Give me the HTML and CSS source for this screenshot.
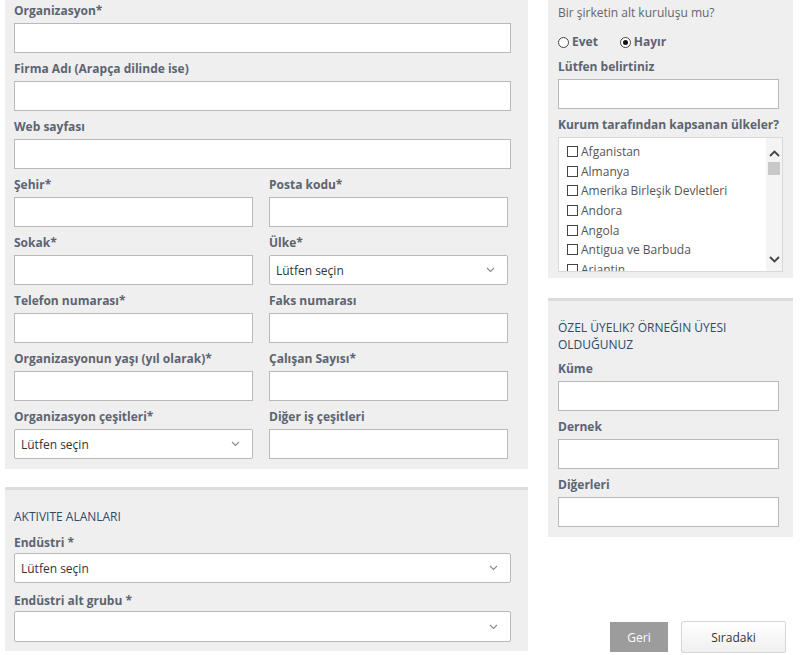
FILE: index.html
```html
<!DOCTYPE html>
<html lang="tr">
<head>
<meta charset="utf-8">
<title>Form</title>
<link rel="stylesheet" href="styles.css">
</head>
<body>
<div class="page">
  <div class="col-left">
    <section class="panel panel-main">
      <div class="field"><label class="lbl">Organizasyon*</label><div class="input"></div></div>
      <div class="field"><label class="lbl">Firma Adı (Arapça dilinde ise)</label><div class="input"></div></div>
      <div class="field"><label class="lbl">Web sayfası</label><div class="input"></div></div>
      <div class="pair">
        <div class="field"><label class="lbl">Şehir*</label><div class="input"></div></div>
        <div class="field"><label class="lbl">Posta kodu*</label><div class="input"></div></div>
      </div>
      <div class="pair">
        <div class="field"><label class="lbl">Sokak*</label><div class="input"></div></div>
        <div class="field"><label class="lbl">Ülke*</label><div class="input select"><span>Lütfen seçin</span><svg class="chev" width="9" height="6" viewBox="0 0 9 6"><path d="M1 1 L4.5 4.5 L8 1" fill="none" stroke="#8a8a8a" stroke-width="1.1"/></svg></div></div>
      </div>
      <div class="pair">
        <div class="field"><label class="lbl">Telefon numarası*</label><div class="input"></div></div>
        <div class="field"><label class="lbl">Faks numarası</label><div class="input"></div></div>
      </div>
      <div class="pair">
        <div class="field"><label class="lbl">Organizasyonun yaşı (yıl olarak)*</label><div class="input"></div></div>
        <div class="field"><label class="lbl">Çalışan Sayısı*</label><div class="input"></div></div>
      </div>
      <div class="pair">
        <div class="field"><label class="lbl">Organizasyon çeşitleri*</label><div class="input select"><span>Lütfen seçin</span><svg class="chev" width="9" height="6" viewBox="0 0 9 6"><path d="M1 1 L4.5 4.5 L8 1" fill="none" stroke="#8a8a8a" stroke-width="1.1"/></svg></div></div>
        <div class="field"><label class="lbl">Diğer iş çeşitleri</label><div class="input"></div></div>
      </div>
    </section>
    <section class="panel panel-top panel-activity">
      <h2 class="heading">AKTIVITE ALANLARI</h2>
      <div class="field"><label class="lbl">Endüstri *</label><div class="input select wide"><span>Lütfen seçin</span><svg class="chev" width="9" height="6" viewBox="0 0 9 6"><path d="M1 1 L4.5 4.5 L8 1" fill="none" stroke="#8a8a8a" stroke-width="1.1"/></svg></div></div>
      <div class="field"><label class="lbl">Endüstri alt grubu *</label><div class="input select wide tall"><span></span><svg class="chev" width="9" height="6" viewBox="0 0 9 6"><path d="M1 1 L4.5 4.5 L8 1" fill="none" stroke="#8a8a8a" stroke-width="1.1"/></svg></div></div>
    </section>
  </div>
  <div class="col-right">
    <section class="panel panel-side">
      <p class="question">Bir şirketin alt kuruluşu mu?</p>
      <div class="radios">
        <span class="radio"><span class="dot"></span>Evet</span>
        <span class="radio"><span class="dot on"></span>Hayır</span>
      </div>
      <div class="field"><label class="lbl">Lütfen belirtiniz</label><div class="input"></div></div>
      <div class="field"><label class="lbl">Kurum tarafından kapsanan ülkeler?</label>
        <div class="listbox">
          <ul class="items">
            <li><span class="cb"></span>Afganistan</li>
            <li><span class="cb"></span>Almanya</li>
            <li><span class="cb"></span>Amerika Birleşik Devletleri</li>
            <li><span class="cb"></span>Andora</li>
            <li><span class="cb"></span>Angola</li>
            <li><span class="cb"></span>Antigua ve Barbuda</li>
            <li><span class="cb"></span>Arjantin</li>
          </ul>
          <div class="scroll">
            <svg width="11" height="7" viewBox="0 0 11 7"><path d="M1 6 L5.5 1.5 L10 6" fill="none" stroke="#444" stroke-width="1.8"/></svg>
            <div class="thumb"></div>
            <div class="spacer"></div>
            <svg width="11" height="7" viewBox="0 0 11 7"><path d="M1 1 L5.5 5.5 L10 1" fill="none" stroke="#444" stroke-width="1.8"/></svg>
          </div>
        </div>
      </div>
    </section>
    <section class="panel panel-top panel-member">
      <h2 class="heading">ÖZEL ÜYELIK? ÖRNEĞIN ÜYESI OLDUĞUNUZ</h2>
      <div class="field"><label class="lbl">Küme</label><div class="input"></div></div>
      <div class="field"><label class="lbl">Dernek</label><div class="input"></div></div>
      <div class="field"><label class="lbl">Diğerleri</label><div class="input"></div></div>
    </section>
    <div class="buttons">
      <button class="btn btn-back">Geri</button>
      <button class="btn btn-next">Sıradaki</button>
    </div>
  </div>
</div>
</body>
</html>
```

FILE: styles.css
```css
* { box-sizing: border-box; }
html, body { margin: 0; padding: 0; background: #fff; }
body {
  font-family: "Open Sans", "Noto Sans", "Liberation Sans", sans-serif;
  font-size: 12px;
  color: #555;
}
.page {
  display: flex;
  gap: 20px;
  padding-left: 5px;
  width: 803px;
  height: 655px;
  overflow: hidden;
}
.col-left { width: 523px; display: flex; flex-direction: column; gap: 18px; }
.col-right { width: 245px; display: flex; flex-direction: column; }

.panel { background: #efefef; }
.panel-main { padding: 2px 17px 3px 9px; }
.panel-top { border-top: 3px solid #dcdcdc; }
.panel-activity { padding: 18px 17px 1px 9px; height: 164px; }
.panel-activity .lbl { margin-bottom: 1px; }
.panel-activity .field { margin-bottom: 9px; }
.panel-side { padding: 4px 14px 0 10px; height: 278px; }
.panel-member { margin-top: 20px; padding: 18px 14px 3px 10px; }

.field { margin-bottom: 7px; }
.lbl {
  display: block;
  font-weight: 700;
  line-height: 18px;
  margin-bottom: 3px;
  color: #5c6471;
  white-space: nowrap;
}
.input {
  height: 30px;
  background: #fff;
  border: 1px solid #b9b9b9;
}
.pair {
  display: grid;
  grid-template-columns: 239px 239px;
  gap: 16px;
}
.select {
  display: flex;
  align-items: center;
  justify-content: space-between;
  padding: 0 12px 0 6px;
  border-radius: 2px;
  color: #333;
}
.select.tall { height: 31px; }
.chev { display: block; }

.heading {
  margin: 0 0 9px;
  font-size: 12px;
  font-weight: 400;
  line-height: 17px;
  color: #2d4a67;
}
.panel-member .heading { margin-bottom: 7px; }

.question { margin: 0; line-height: 18px; color: #666; }
.radios {
  display: flex;
  gap: 22px;
  margin: 11px 0 7px;
  line-height: 18px;
  font-weight: 700;
  color: #5c6471;
}
.radio { display: flex; align-items: center; }
.dot {
  width: 11px; height: 11px;
  border: 1px solid #444;
  border-radius: 50%;
  margin-right: 3px;
  background: #fff;
  position: relative;
}
.dot.on::after {
  content: "";
  position: absolute;
  left: 2px; top: 2px;
  width: 5px; height: 5px;
  border-radius: 50%;
  background: #111;
}

.listbox {
  display: flex;
  height: 135px;
  width: 225px;
  background: #fff;
  border: 1px solid #d8d8d8;
  overflow: hidden;
}
.items {
  list-style: none;
  margin: 0;
  padding: 4px 0 0 8px;
  flex: 1;
}
.items li {
  display: flex;
  align-items: center;
  height: 19.6px;
  color: #555;
  white-space: nowrap;
}
.cb {
  width: 11px; height: 11px;
  border: 1px solid #444;
  margin-right: 3px;
  background: #fff;
}
.scroll {
  width: 16px;
  background: #f4f4f4;
  display: flex;
  flex-direction: column;
  align-items: center;
  padding: 12px 0 8px;
}
.thumb {
  width: 12px;
  height: 13px;
  background: #c8c8c8;
  margin-top: 5px;
}
.spacer { flex: 1; }

.buttons {
  display: flex;
  justify-content: flex-end;
  align-items: center;
  gap: 13px;
  margin-top: 84px;
  padding-right: 7px;
}
.btn {
  font-family: "Open Sans", "Noto Sans", "Liberation Sans", sans-serif;
  font-size: 12px;
  cursor: pointer;
}
.btn-back {
  width: 58px;
  height: 30px;
  background: #9c9c9c;
  color: #fff;
  border: none;
}
.btn-next {
  width: 105px;
  height: 32px;
  background: linear-gradient(#ffffff, #f0f0f0);
  color: #333;
  border: 1px solid #d6d6d6;
  border-radius: 2px;
}
```
